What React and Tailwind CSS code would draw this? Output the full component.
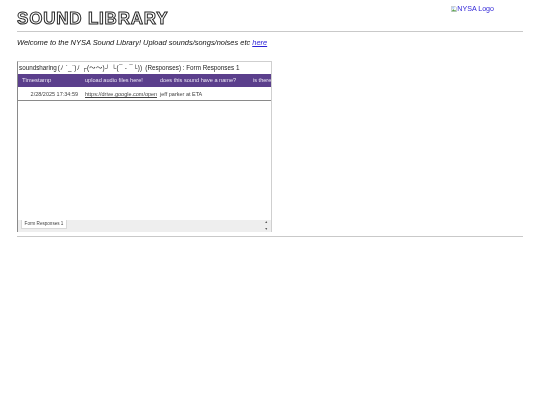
export default function App() {
  const sans = "font-['Liberation_Sans','DejaVu_Sans','Noto_Sans_CJK_JP',sans-serif]";
  return (
    <div className={`${sans} min-h-[405px] bg-white px-[17px] pt-[5px] text-black blur-[0.35px]`}>
      <header className="flex h-[26px] items-start justify-between">
        <h1 className="mt-[5px] text-[17px] leading-[17px] font-bold tracking-[0.8px] text-white [-webkit-text-stroke:1px_#2a2a2a]">
          SOUND LIBRARY
        </h1>
        <a href="#" className="mt-[0.5px] mr-[29px] flex items-center text-[7.1px] leading-[7px] text-[#2a1fd6]">
          <svg width="6" height="6" viewBox="0 0 16 16" className="shrink-0">
            <path d="M1 1h10l4 4v10H1z" fill="#fff" stroke="#9aa0a6" strokeWidth="1.5" />
            <path d="M2 14l4-6 3 4 2-2 3 4z" fill="#5aa54b" />
            <path d="M3 3h6v4H3z" fill="#a8c7fa" />
          </svg>
          NYSA Logo
        </a>
      </header>
      <hr className="border-0 border-t border-[#c9c9c9]" />
      <p className="mt-[5px] text-[7.45px] leading-[11px] text-[#111] italic">
        Welcome to the NYSA Sound Library! Upload sounds/songs/noises etc{" "}
        <a href="#" className="text-[#2a1fd6] underline">here</a>
      </p>
      <section className="mt-[13px] flex h-[171px] w-[255px] flex-col border border-b-0 border-[#cfcfcf] border-l-[#8a8a8a] bg-white">
        <div className="flex h-[12px] shrink-0 items-center pl-[1px] text-[6.3px] leading-none whitespace-nowrap text-[#222] overflow-hidden">
          soundsharing <span className="mx-[1px] tracking-[0.3px]">(ﾉ ´_`)ﾉ ┌(～～)┘ └(¯ - ¯└))</span>&nbsp;(Responses) : Form Responses 1
        </div>
        <div className="flex h-[13px] shrink-0 items-center overflow-hidden bg-[#5b3f8c] text-[5.6px] whitespace-nowrap text-[#e8e3f2]">
          <span className="w-[67px] shrink-0 pl-[4px] text-[6px]">Timestamp</span>
          <span className="w-[75px] shrink-0">upload audio files here!</span>
          <span className="w-[93px] shrink-0">does this sound have a name?</span>
          <span className="shrink-0">is there</span>
        </div>
        <div className="flex h-[14px] shrink-0 items-center overflow-hidden border-b border-[#8a8a8a] pt-[1px] text-[5.5px] whitespace-nowrap text-[#444]">
          <span className="w-[60px] shrink-0 text-right">2/28/2025 17:34:59</span>
          <span className="ml-[7px] w-[72px] shrink-0 overflow-hidden underline">https://drive.google.com/open</span>
          <span className="ml-[3px] shrink-0">jeff parker at ETA</span>
        </div>
        <div className="flex-1" />
        <div className="flex h-[12px] shrink-0 items-start justify-between bg-[#eeeeee]">
          <div className="ml-[3px] flex h-[9px] w-[46px] items-center justify-center border border-t-0 border-[#d8d8d8] bg-white text-[4.6px] leading-none whitespace-nowrap text-[#444]">
            Form Responses 1
          </div>
          <div className="mr-[3px] flex h-full flex-col items-center justify-between py-[1px] text-[3.5px] leading-none text-[#555]">
            <span>▲</span>
            <span>▼</span>
          </div>
        </div>
      </section>
      <hr className="mt-[4px] border-0 border-t border-[#c9c9c9]" />
    </div>
  );
}
